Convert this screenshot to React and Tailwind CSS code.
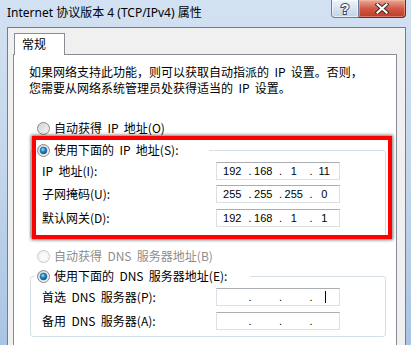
import React from 'react';

const cjk = "font-['Noto_Sans_CJK_SC',sans-serif]";

const Radio = ({ checked = false, disabled = false }) => (
  <svg width="13" height="13" viewBox="0 0 13 13" className="shrink-0">
    <defs>
      <linearGradient id={`rg-${checked}-${disabled}`} x1="0" y1="0" x2="1" y2="1">
        <stop offset="0" stopColor={disabled ? '#f4f4f4' : '#c9c9c9'} />
        <stop offset="1" stopColor="#ffffff" />
      </linearGradient>
      <radialGradient id="dot" cx="0.4" cy="0.35" r="0.7">
        <stop offset="0" stopColor="#9fe0ff" />
        <stop offset="0.45" stopColor="#1a8fd6" />
        <stop offset="1" stopColor="#0c4f86" />
      </radialGradient>
    </defs>
    <circle cx="6.5" cy="6.5" r="6" fill={`url(#rg-${checked}-${disabled})`} stroke={disabled ? '#c8c8c8' : '#8a8a8a'} strokeWidth="1" />
    <circle cx="6.5" cy="6.5" r="4.4" fill="none" stroke={disabled ? '#ececec' : '#e2e2e2'} strokeWidth="0.8" />
    {checked && <circle cx="6.5" cy="6.5" r="3.4" fill="url(#dot)" stroke="#1d4f7a" strokeWidth="0.5" />}
  </svg>
);

const RadioRow = ({ label, checked, disabled }) => (
  <div className={`flex h-[16px] items-center gap-[4px] text-[12px] leading-[16px] ${disabled ? 'text-[#8d8d8d]' : 'text-black'}`}>
    <Radio checked={checked} disabled={disabled} />
    <span className="whitespace-pre">{label}</span>
  </div>
);

const IpBox = ({ parts = ['', '', '', ''], cursor = false }) => (
  <div className="flex h-[18px] w-[124px] border border-[#dbdfe6] border-t-[#abadb3] bg-white font-['Liberation_Sans',sans-serif] text-[11px] leading-[16px] text-black">
    {parts.map((p, i) => (
      <div key={i} className="flex w-[30.5px]">
        {i > 0 && <span className="ml-[1px] w-0">.</span>}
        <span className="flex flex-1 justify-center">
          {p}
          {cursor && i === 3 && <span className="ml-[3px] mt-[2px] h-[12px] w-px bg-black" />}
        </span>
      </div>
    ))}
  </div>
);

const Field = ({ label, parts, cursor, className = '' }) => (
  <div className={`flex items-center pl-[11px] ${className}`}>
    <span className="w-[174px] whitespace-pre text-[12px] leading-[16px]">{label}</span>
    <IpBox parts={parts} cursor={cursor} />
  </div>
);

const GroupBox = ({ legend, legendWidth, children, className = '' }) => (
  <div className={`ml-[16px] mr-[10px] rounded-[3px] border border-[#d5dfe5] ${className}`}>
    <div className={`-mt-[9px] ml-[4px] bg-white pl-[2px] ${legendWidth}`}>
      <RadioRow label={legend} checked />
    </div>
    {children}
  </div>
);

export default function App() {
  return (
    <div className={`relative h-[345px] w-[411px] overflow-hidden bg-gradient-to-b from-[#d3e2f2] via-[#c3d6eb] to-[#a9c4e3] ${cjk}`}>
      {/* Title bar */}
      <div className="flex h-[27px]">
        <div className="pl-[7px] pt-[5px] text-[12px] leading-[16px] text-black font-['Noto_Sans','Noto_Sans_CJK_SC',sans-serif]">
          Internet 协议版本 4 (TCP/IPv4) 属性
        </div>
        <div className="ml-auto mr-[5px] flex h-[18px]">
          <div className="flex w-[28px] items-center justify-center rounded-bl-[4px] border border-t-0 border-[#6e7f94] bg-gradient-to-b from-[#eef3f9] via-[#d9e3ef] to-[#c2d2e4] shadow-[inset_0_0_0_1px_rgba(255,255,255,0.6)]">
            <svg width="12" height="14" viewBox="0 0 12 14">
              <text x="6" y="12" textAnchor="middle" fontSize="14" fontWeight="bold" fontFamily="Liberation Sans, sans-serif" fill="#ffffff" stroke="#3e4a5a" strokeWidth="2" paintOrder="stroke">?</text>
            </svg>
          </div>
          <div className="flex w-[47px] items-center justify-center rounded-br-[4px] border border-l-0 border-t-0 border-[#5c2f2b] bg-gradient-to-b from-[#e9a896] via-[#d05a47] to-[#c03a26] shadow-[inset_0_0_0_1px_rgba(255,200,180,0.45)]">
            <svg width="14" height="11" viewBox="0 0 14 11">
              <path d="M2.5 1.5 L11.5 9.5 M11.5 1.5 L2.5 9.5" stroke="#3a2a2a" strokeWidth="4.2" strokeLinecap="square" />
              <path d="M2.5 1.5 L11.5 9.5 M11.5 1.5 L2.5 9.5" stroke="#ffffff" strokeWidth="2.2" strokeLinecap="square" />
            </svg>
          </div>
        </div>
      </div>

      {/* Client area */}
      <div className="ml-[7px] mr-[5px] h-[330px] border-l border-r border-t border-[#6f7e90] bg-[#f0f0f0] pl-[5px] pr-[8px] pt-[5px]">
        {/* Tab */}
        <div className="relative z-10 -mb-px ml-px flex h-[22px] w-[51px] border-l border-r border-t border-[#898c95] bg-white pl-[7px] pt-[2px] text-[12px] leading-[16px] text-black">
          常规
        </div>

        {/* Panel */}
        <div className="h-[400px] border border-[#898c95] bg-white text-black">
          <div className="pl-[15px] pt-[9px] text-[12px] leading-[16px]">
            <div className="whitespace-pre">如果网络支持此功能，则可以获取自动指派的  IP  设置。否则，</div>
            <div className="whitespace-pre">您需要从网络系统管理员处获得适当的  IP  设置。</div>
          </div>

          <div className="ml-[23px] mt-[24px]">
            <RadioRow label="自动获得  IP  地址(O)" />
          </div>

          <GroupBox legend="使用下面的  IP  地址(S):" legendWidth="w-[174px]" className="mt-[14px] pb-[10px]">
            <Field className="mt-[4px]" label="IP  地址(I):" parts={['192', '168', '1', '11']} />
            <Field className="mt-[5px]" label="子网掩码(U):" parts={['255', '255', '255', '0']} />
            <Field className="mt-[6px]" label="默认网关(D):" parts={['192', '168', '1', '1']} />
          </GroupBox>

          <div className="ml-[23px] mt-[10px]">
            <RadioRow label="自动获得  DNS  服务器地址(B)" disabled />
          </div>

          <GroupBox legend="使用下面的  DNS  服务器地址(E):" legendWidth="w-[215px]" className="mt-[12px] pb-[6px]">
            <Field className="mt-[4px]" label="首选  DNS  服务器(P):" cursor />
            <Field className="mt-[6px]" label="备用  DNS  服务器(A):" />
          </GroupBox>
        </div>
      </div>

      {/* Red highlight drawn over the static IP group */}
      <div className="pointer-events-none absolute left-[32px] top-[136px] h-[103px] w-[360px] border-[4px] border-[#ff0000] shadow-[0_0_3px_1px_rgba(0,0,0,0.55)]" />
    </div>
  );
}
